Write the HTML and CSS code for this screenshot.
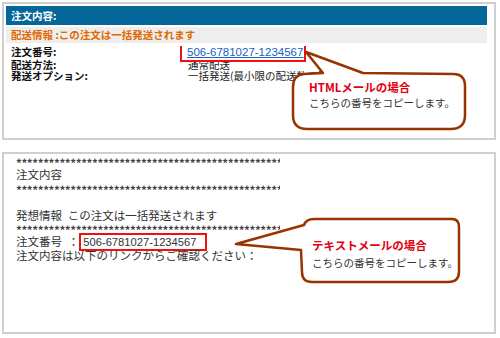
FILE: index.html
```html
<!DOCTYPE html>
<html lang="ja">
<head>
    <meta charset="UTF-8">
    <meta name="viewport" content="width=device-width, initial-scale=1.0">
    <title>注文番号の確認</title>
    <link rel="stylesheet" href="styles.css">
</head>
<body>
    <div class="page">
        <div class="panel html-mail">
            <div class="head">注文内容:</div>
            <div class="ship-info">配送情報 :この注文は一括発送されます</div>
            <div class="details">
                <div class="label">注文番号:</div>
                <div class="value"><a class="order-no">506-6781027-1234567</a></div>
                <div class="label">配送方法:</div>
                <div class="value">通常配送</div>
                <div class="label">発送オプション:</div>
                <div class="value">一括発送(最小限の配送数で発送)</div>
            </div>
        </div>

        <div class="panel text-mail">
            <div class="stars">**************************************************</div>
            <div class="line">注文内容</div>
            <div class="stars">**************************************************</div>
            <div class="line"></div>
            <div class="line">発想情報&ensp;この注文は一括発送されます</div>
            <div class="stars">**************************************************</div>
            <div class="line">注文番号&ensp;：<span class="order-box">506-6781027-1234567</span></div>
            <div class="line">注文内容は以下のリンクからご確認ください：</div>
        </div>

        <!-- callouts -->
        <div class="callout callout-html">
            <svg width="180" height="84" viewBox="0 0 180 84">
                <path d="M16,2 L33,23 L14,24 Q3,25 3,37 L3,65 Q3,79 17,79 L161,79 Q175,79 175,65 L175,36 Q175,24 163,24 L73,23 Z"/>
            </svg>
            <div class="callout-text">
                <div class="callout-title">HTMLメールの場合</div>
                <div>こちらの番号をコピーします。</div>
            </div>
        </div>

        <div class="callout callout-text-mail">
            <svg width="238" height="74" viewBox="0 0 238 74">
                <path d="M8,30 L76,11 Q78,5 86,5 L224,5 Q231,5 231,13 L231,58 Q231,68 220,68 L84,68 Q74,68 74,58 L73,36 Z"/>
            </svg>
            <div class="callout-text">
                <div class="callout-title">テキストメールの場合</div>
                <div>こちらの番号をコピーします。</div>
            </div>
        </div>
    </div>
</body>
</html>
```

FILE: styles.css
```css
body {
    margin: 0;
    background-color: #fff;
    font-family: "Noto Sans CJK JP", sans-serif;
    color: #222;
}

.page {
    position: relative;
    width: 500px;
    height: 338px;
    padding: 2px 4px 2px 2px;
    box-sizing: border-box;
    overflow: hidden;
}

.panel {
    border: 2px solid #cfcfcf;
    box-sizing: border-box;
}

/* HTML mail */
.html-mail {
    height: 138px;
    padding: 2px 7px 0 2px;
    font-size: 10.5px;
}

.head {
    height: 19px;
    background-color: #056699;
    color: #fff;
    font-weight: bold;
    line-height: 19px;
    padding-left: 5px;
}

.ship-info {
    height: 16px;
    margin-top: 2px;
    background-color: #eeeeee;
    color: #e06a00;
    font-weight: bold;
    line-height: 16px;
    padding-left: 5px;
}

.details {
    display: grid;
    grid-template-columns: 177px 1fr;
    margin-top: 3px;
    padding-left: 5px;
    line-height: 11.5px;
    white-space: nowrap;
    overflow: hidden;
}

.label {
    font-weight: bold;
    color: #111;
}

.value {
    color: #222;
}

.order-no {
    position: relative;
    margin-left: -1px;
    font-family: "Liberation Sans", Arial, sans-serif;
    font-size: 11.5px;
    color: #1763c6;
    text-decoration: underline;
}

.order-no::after {
    content: "";
    position: absolute;
    left: -7px;
    right: -3px;
    top: -2.5px;
    bottom: -3.5px;
    border: 2px solid #f01010;
}

/* text mail */
.text-mail {
    height: 182px;
    margin-top: 12px;
    padding: 1px 0 0 12px;
    font-size: 11.5px;
    color: #333;
}

.line {
    height: 13.4px;
    line-height: 13.4px;
    white-space: nowrap;
}

.stars {
    width: 264px;
    height: 13.4px;
    overflow: hidden;
    white-space: nowrap;
    line-height: 10.4px;
    padding-top: 3px;
    box-sizing: border-box;
    font-weight: bold;
    color: #444;
    letter-spacing: -0.4px;
}

.order-box {
    font-family: "Liberation Sans", Arial, sans-serif;
    font-size: 11.2px;
    padding: 1px 9px 1px 2px;
    border: 2px solid #f01010;
}

/* callouts */
.callout {
    position: absolute;
    z-index: 2;
}

.callout svg {
    position: absolute;
    left: 0;
    top: 0;
}

.callout path {
    fill: #fff;
    stroke: #993300;
    stroke-width: 2.5;
    stroke-linejoin: round;
}

.callout-text {
    position: relative;
    font-size: 10.5px;
    color: #333;
    white-space: nowrap;
}

.callout-title {
    color: #e30010;
    font-size: 11.5px;
    font-weight: bold;
}

.callout-html {
    left: 290px;
    top: 50px;
    width: 180px;
    height: 84px;
}

.callout-html .callout-text {
    left: 19px;
    top: 29.5px;
    line-height: 15px;
}

.callout-text-mail {
    left: 228px;
    top: 214px;
    width: 238px;
    height: 74px;
}

.callout-text-mail .callout-text {
    left: 84px;
    top: 22.5px;
    line-height: 17px;
}
```
